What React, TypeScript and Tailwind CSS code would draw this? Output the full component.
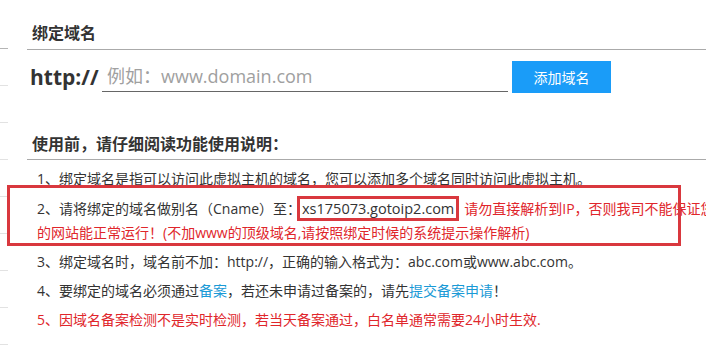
const sideLines = [0, 1, 2, 3, 4, 5, 6, 7, 8];

export default function App() {
  return (
    <div className="relative w-[706px] h-[349px] overflow-hidden bg-white flex font-['Open_Sans','Noto_Sans_CJK_SC',sans-serif] text-[#333]">
      {/* cut-off sidebar on the left */}
      <div className="w-[8px] shrink-0 flex flex-col pt-[12px]">
        {sideLines.map((i) => (
          <div key={i} className={`h-[37px] shrink-0 border-b ${i === 0 ? "border-[#b5b5b5]" : "border-[#e2e2e2]"}`} />
        ))}
      </div>

      <div className="flex-1 ml-[19px] pt-[21px] min-w-0">
        <div className="pl-[5px] pb-[4px] border-b border-[#aaa]">
          <h2 className="text-[16px] leading-[24px] font-bold text-[#333]">绑定域名</h2>
        </div>

        <div className="mt-[11px] flex items-start h-[32px] pl-[3px]">
          <span className="w-[72px] shrink-0 text-[21px] leading-[32px] font-bold text-[#333]">http://</span>
          <input
            className="w-[406px] h-[31px] border-b border-[#666] pl-[5px] text-[18px] text-[#333] outline-none placeholder:text-[#a0a0a0]"
            placeholder="例如：www.domain.com"
          />
          <button className="ml-[4px] w-[99px] h-[32px] bg-[#1a9cf8] text-white text-[14px]">添加域名</button>
        </div>

        <div className="mt-[39px] pl-[5px] pb-[3px] border-b border-[#aaa]">
          <h2 className="text-[16px] leading-[24px] font-bold text-[#333]">使用前，请仔细阅读功能使用说明：</h2>
        </div>

        <div className="pt-[4px] pl-[10px] text-[14px] whitespace-nowrap">
          <p className="leading-[29px]">1、绑定域名是指可以访问此虚拟主机的域名，您可以添加多个域名同时访问此虚拟主机。</p>
          <div className="pt-[3px] pb-[3px] leading-[23px]">
            <p>
              2、请将绑定的域名做别名（Cname）至：
              <span className="inline-block -ml-[4px] px-[2px] leading-[19px] border-[3px] border-[#d9383e] text-[14.5px]">xs175073.gotoip2.com</span>
              <span className="ml-[5px] text-[#e0262b]">请勿直接解析到IP，否则我司不能保证您</span>
            </p>
            <p className="text-[#e0262b]">的网站能正常运行！(不加www的顶级域名,请按照绑定时候的系统提示操作解析)</p>
          </div>
          <p className="leading-[29px]">3、绑定域名时，域名前不加：http://，正确的输入格式为：abc.com或www.abc.com。</p>
          <p className="leading-[29px]">
            4、要绑定的域名必须通过<a className="text-[#1a9ad6]">备案</a>，若还未申请过备案的，请先<a className="text-[#1a9ad6]">提交备案申请</a>！
          </p>
          <p className="leading-[29px] text-[#e0262b]">5、因域名备案检测不是实时检测，若当天备案通过，白名单通常需要24小时生效.</p>
        </div>
      </div>

      {/* red annotation frame */}
      <div className="absolute left-[7px] top-[185px] w-[674px] h-[61px] border-[3px] border-[#d9383e] pointer-events-none" />
    </div>
  );
}
